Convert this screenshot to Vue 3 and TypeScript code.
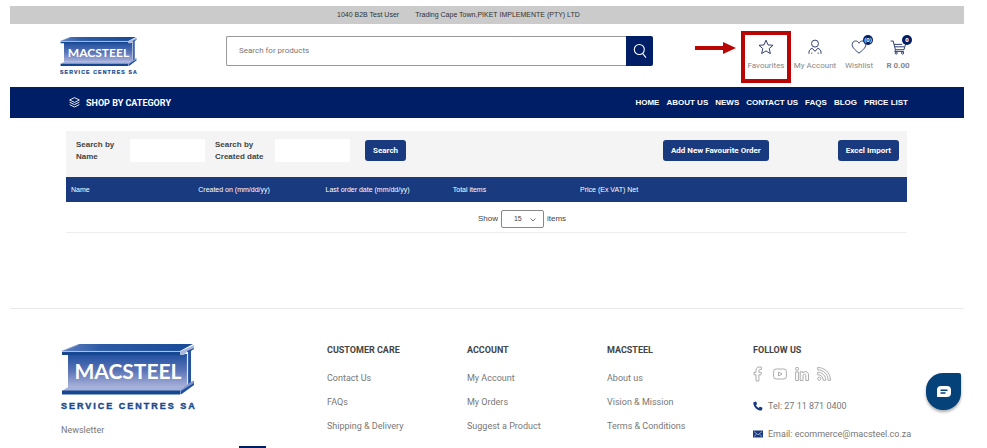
<script setup lang="ts">
import { ref } from 'vue'

interface FooterColumn {
  title: string
  links: string[]
}

const navLinks: string[] = ['HOME', 'ABOUT US', 'NEWS', 'CONTACT US', 'FAQS', 'BLOG', 'PRICE LIST']
const tableColumns: string[] = [
  'Name',
  'Created on (mm/dd/yy)',
  'Last order date (mm/dd/yy)',
  'Total items',
  'Price (Ex VAT) Net',
]
const footerColumns: FooterColumn[] = [
  { title: 'CUSTOMER CARE', links: ['Contact Us', 'FAQs', 'Shipping & Delivery'] },
  { title: 'ACCOUNT', links: ['My Account', 'My Orders', 'Suggest a Product'] },
  { title: 'MACSTEEL', links: ['About us', 'Vision & Mission', 'Terms & Conditions'] },
]

const query = ref('')
const nameFilter = ref('')
const dateFilter = ref('')
const pageSize = ref(15)
const email = ref('')
</script>

<template>
  <svg class="defs" width="0" height="0" aria-hidden="true">
    <defs>
      <linearGradient id="web" x1="0" y1="0" x2="0" y2="1">
        <stop offset="0" stop-color="#1f4f9f" />
        <stop offset="0.5" stop-color="#5a73b6" />
        <stop offset="1" stop-color="#a9b1da" />
      </linearGradient>
      <linearGradient id="flange" x1="0" y1="0" x2="1" y2="0">
        <stop offset="0" stop-color="#5f80bf" />
        <stop offset="0.3" stop-color="#2c5aa6" />
        <stop offset="1" stop-color="#174a97" />
      </linearGradient>
      <symbol id="macsteel" viewBox="0 0 134 66" overflow="visible">
        <path d="M7 10h119v33H7z" fill="url(#web)" />
        <path d="M1 7 18 0h114l-13 7z" fill="url(#flange)" />
        <path d="M1 7 18 .3" stroke="#a9b9de" stroke-width="0.8" />
        <path d="M1 7.400h118" stroke="#8fa5d3" stroke-width="0.8" />
        <path d="M1 8h118v3H1z" fill="#164891" />
        <path d="M126 6l7-4v3l-3 2v32l-4 3z" fill="#2454a0" />
        <path d="M119 11V7.500L133 1v3l-6 2.500-4 4.500z" fill="#a9b9de" />
        <path d="M126.500 8v34" stroke="#dfe5f3" stroke-width="1.200" />
        <path d="M1 47 8 42.500h116l-5 4.500z" fill="#a4b1da" />
        <path d="M1 46.500h118v4H1z" fill="#164891" />
        <path d="M119 50.500v-4l10-8 4-2v3.500z" fill="#7e94c9" />
        <path d="M120 50.500 133 41v-2l-13 8z" fill="#1f4f9f" />
        <text x="67" y="35" text-anchor="middle" font-family="Lato, sans-serif" font-size="21" font-weight="700" fill="#fff">MACSTEEL</text>
        <text x="0" y="65" font-family="'Liberation Sans', sans-serif" font-size="9" font-weight="700" letter-spacing="2" fill="#174a8f" stroke="#174a8f" stroke-width="0.4">SERVICE CENTRES SA</text>
      </symbol>
    </defs>
  </svg>

  <div class="page">
    <div class="topbar">
      <span>1040 B2B Test User</span>
      <span>Trading Cape Town,PIKET IMPLEMENTE (PTY) LTD</span>
    </div>

    <header class="header">
      <a class="logo" href="#" aria-label="Macsteel Service Centres SA">
        <svg class="logo-small"><use href="#macsteel" /></svg>
      </a>
      <form class="search" @submit.prevent>
        <input v-model="query" type="text" placeholder="Search for products" aria-label="Search for products" />
        <button type="submit" aria-label="Search">
          <svg width="14" height="16" viewBox="0 0 14 16" fill="none" stroke="#fff" stroke-width="1.1">
            <circle cx="6.3" cy="6.5" r="5" />
            <path d="M9.6 10.4 13 14.6" />
          </svg>
        </button>
      </form>
      <nav class="actions" aria-label="Account">
        <a class="action highlighted" href="#">
          <svg class="arrow" width="41" height="12" viewBox="0 0 41 12" aria-hidden="true">
            <path d="M0 4h28V0l13 6-13 6V8H0z" fill="#b90504" />
          </svg>
          <svg width="16" height="16" viewBox="0 0 16 16" class="line">
            <path d="M8 1.2 10 5.9 15 6.3 11.2 9.6 12.4 14.6 8 11.9 3.6 14.6 4.8 9.6 1 6.3 6 5.9z" />
          </svg>
          <span>Favourites</span>
        </a>
        <a class="action" href="#">
          <svg width="16" height="16" viewBox="0 0 16 16" class="line">
            <circle cx="8" cy="4.6" r="3.5" />
            <path d="M2 14.8v-1.6c0-2 1.4-3.4 3.3-3.9L8 12.4l2.7-3.1c1.9.5 3.3 1.9 3.3 3.9v1.6M4.8 14.8v-1.2M11.2 14.8v-1.2" />
          </svg>
          <span>My Account</span>
        </a>
        <a class="action" href="#">
          <svg width="16" height="16" viewBox="0 0 16 16" class="line">
            <path d="M8 14.2C5.4 12 1.2 9.1 1.2 5.6 1.2 3.5 2.7 2 4.6 2 6 2 7.3 2.8 8 4.2 8.7 2.8 10 2 11.4 2c1.9 0 3.4 1.5 3.4 3.6 0 3.500-4.200 6.400-6.800 8.600z" />
          </svg>
          <span>Wishlist</span>
          <b class="badge">(0)</b>
        </a>
        <a class="action cart" href="#">
          <svg width="16" height="16" viewBox="0 0 16 16" class="line">
            <path d="M.6 2h2.600L5.400 10.700h8.600L15.600 5M4.600 7.800h9.800M4.200 5.400h8M5.400 10.700l-.6 1.700h9" />
            <circle cx="6.200" cy="14" r="1.100" />
            <circle cx="12.600" cy="14" r="1.100" />
          </svg>
          <span>R 0.00</span>
          <b class="badge">0</b>
        </a>
      </nav>
    </header>

    <div class="menubar">
      <a class="category" href="#">
        <svg width="11" height="11" viewBox="0 0 11 11" fill="none" stroke="#fff" stroke-width="0.9">
          <path d="M5.500.6 10.400 3 5.500 5.400.6 3zM.6 5.200l4.900 2.400 4.900-2.400M.6 7.600 5.500 10l4.900-2.400" />
        </svg>
        SHOP BY CATEGORY
      </a>
      <nav class="links" aria-label="Main">
        <a v-for="link in navLinks" :key="link" href="#">{{ link }}</a>
      </nav>
    </div>

    <main class="content">
      <form class="filters" @submit.prevent>
        <label class="label-name" for="filter-name">Search by Name</label>
        <input id="filter-name" v-model="nameFilter" type="text" />
        <label class="label-date" for="filter-date">Search by Created date</label>
        <input id="filter-date" v-model="dateFilter" type="text" />
        <button class="btn" type="submit">Search</button>
        <div class="right">
          <button class="btn" type="button">Add New Favourite Order</button>
          <button class="btn" type="button">Excel Import</button>
        </div>
      </form>
      <table class="orders">
        <thead>
          <tr>
            <th v-for="column in tableColumns" :key="column" scope="col">{{ column }}</th>
          </tr>
        </thead>
      </table>
      <div class="pager">
        <label for="page-size">Show</label>
        <span class="select">
          <select id="page-size" v-model="pageSize">
            <option :value="15">15</option>
            <option :value="30">30</option>
            <option :value="50">50</option>
          </select>
          <svg width="6" height="4" viewBox="0 0 6 4" fill="none" stroke="#777"><path d="M.5.500 3 3 5.500.500" /></svg>
        </span>
        <span>items</span>
      </div>
    </main>

    <footer class="footer">
      <section class="brand">
        <svg class="logo-large" role="img" aria-label="Macsteel Service Centres SA"><use href="#macsteel" /></svg>
        <form class="newsletter" @submit.prevent>
          <label for="newsletter-email">Newsletter</label>
          <div class="subscribe">
            <input id="newsletter-email" v-model="email" type="email" />
            <button type="submit" aria-label="Subscribe"></button>
          </div>
        </form>
      </section>
      <section v-for="column in footerColumns" :key="column.title">
        <h2>{{ column.title }}</h2>
        <ul>
          <li v-for="link in column.links" :key="link"><a href="#">{{ link }}</a></li>
        </ul>
      </section>
      <section>
        <h2>FOLLOW US</h2>
        <div class="social">
          <a href="#" aria-label="Facebook">
            <svg width="14" height="16" viewBox="0 0 14 16">
              <path d="M5 15V8.800H3V6.300h2V4.200C5 2.100 6.200 1 8.200 1H10.400v2.500H9c-.8 0-1.100.4-1.100 1.100v1.700h2.400L9.900 8.800h-2V15z" />
            </svg>
          </a>
          <a href="#" aria-label="YouTube">
            <svg width="14" height="16" viewBox="0 0 14 16">
              <rect x="0.600" y="3" width="12.800" height="10" rx="2.500" />
              <path d="M5.500 6v4l3.500-2z" />
            </svg>
          </a>
          <a href="#" aria-label="LinkedIn">
            <svg width="14" height="16" viewBox="0 0 14 16">
              <circle cx="2" cy="2.800" r="1.500" />
              <path d="M.6 5.800h2.800V14.500H.6zM5.200 5.800h2.600v1.200c1.200-2 5.700-2 5.700 2v5.500h-2.700V9.800c0-2.300-2.800-2.300-2.800 0v4.700H5.200z" />
            </svg>
          </a>
          <a href="#" aria-label="RSS">
            <svg width="14" height="16" viewBox="0 0 14 16">
              <circle cx="2.300" cy="12.700" r="1.600" />
              <path d="M.7 6.200c4.600 0 8.100 3.500 8.100 8.100H6.300c0-3.200-2.400-5.600-5.600-5.600zM.7 1.500c7.200 0 12.800 5.600 12.800 12.800h-2.400C11.100 8.400 6.600 3.900.7 3.900z" />
            </svg>
          </a>
        </div>
        <a class="contact" href="#">
          <svg width="10" height="10" viewBox="0 0 10 10" fill="#1a3a80">
            <path d="M.7 1.200 2.600.5c.3-.1.500 0 .6.300l.8 2c.1.200 0 .4-.2.600l-.9.700c.6 1.300 1.500 2.200 2.800 2.800l.8-.9c.1-.2.400-.3.600-.2l2 .8c.3.100.4.400.3.600L9 9c-.1.300-.3.500-.6.500C4 9.500.3 6 .3 1.700c0-.2.100-.4.400-.5z" />
          </svg>
          <span>Tel: 27 11 871 0400</span>
        </a>
        <a class="contact" href="#">
          <svg width="10" height="10" viewBox="0 0 10 10">
            <path d="M0 1.500h10v7H0z" fill="#1a3a80" />
            <path d="M1 2.600 5 5.800 9 2.600M1 7.600l2.600-2.400M9 7.600 6.400 5.200" fill="none" stroke="#c5cfe4" stroke-width="0.700" />
          </svg>
          <span>Email: ecommerce@macsteel.co.za</span>
        </a>
      </section>
    </footer>
    <button class="chat" type="button" aria-label="Chat">
      <svg width="16" height="14" viewBox="0 0 16 14">
        <path d="M5 1h6a4 4 0 0 1 4 4v3a4 4 0 0 1-4 4H1V5a4 4 0 0 1 4-4z" fill="#fff" />
        <path d="M4.500 5.200h7M4.500 8h5" stroke="#06427a" stroke-width="1.400" />
      </svg>
    </button>
  </div>
</template>

<style>
body {
  background: #fff;
  overflow: hidden;
}
</style>

<style scoped>
.page {
  margin: 6px 23px 0 10px;
  font: 9px/12px 'Liberation Sans', Arial, sans-serif;
  color: #444;
}
.defs {
  position: absolute;
}
a {
  color: inherit;
  text-decoration: none;
}
input,
select,
button {
  box-sizing: border-box;
  margin: 0;
  padding: 0;
  border: 0;
  font: inherit;
  color: inherit;
}
.topbar {
  display: flex;
  gap: 16px;
  padding: 0 327px;
  background: #cbcbcb;
  font-size: 7px;
  line-height: 18px;
  white-space: nowrap;
  color: #333;
}
.header {
  display: flex;
  align-items: center;
  height: 63px;
  padding: 0 47px 0 50px;
}
.logo-small {
  display: block;
  width: 77px;
  height: 38px;
  overflow: visible;
}
.search {
  display: flex;
  flex: 1;
  max-width: 427px;
  height: 30px;
  margin: 0 0 9px 89px;
}
.search input {
  flex: 1;
  min-width: 0;
  padding: 0 12px;
  border: 1px solid #999;
  border-right: 0;
  border-radius: 2px 0 0 2px;
  font-family: Roboto, sans-serif;
  font-size: 8px;
}
.search input::placeholder {
  color: #777;
  opacity: 1;
}
.search button {
  display: grid;
  place-items: center;
  width: 27px;
  border-radius: 0 2px 2px 0;
  background: #001e66;
}
.actions {
  display: grid;
  grid-template-columns: 50px 48px 40px 38px;
  margin-left: auto;
  font-family: Roboto, sans-serif;
  font-size: 8px;
  color: #888;
}
.action {
  position: relative;
  display: flex;
  flex-direction: column;
  align-items: center;
  gap: 5px;
  white-space: nowrap;
}
.line {
  fill: none;
  stroke: #1d2c62;
  stroke-width: 0.9;
}
.highlighted::after {
  content: '';
  position: absolute;
  inset: -8px 0 -11px;
  border: 4px solid #b90504;
}
.arrow {
  position: absolute;
  top: 3px;
  right: 55px;
}
.badge {
  position: absolute;
  top: -4px;
  left: 50%;
  width: 10px;
  margin-left: 4px;
  border-radius: 50%;
  background: #001e66;
  color: #fff;
  font-size: 6px;
  line-height: 10px;
  text-align: center;
}
.cart {
  font-weight: 700;
}
.menubar {
  display: flex;
  align-items: center;
  justify-content: space-between;
  height: 31px;
  padding: 0 56px 0 59px;
  background: #001e66;
  color: #fff;
  font-weight: 700;
}
.category {
  display: flex;
  align-items: center;
  gap: 6px;
  font-family: Roboto, sans-serif;
}
.links {
  display: flex;
  gap: 7px;
  font-size: 8px;
}
.content {
  margin: 13px 57px 0 56px;
}
.filters {
  display: flex;
  align-items: flex-start;
  height: 38px;
  padding: 8px 8px 0 10px;
  background: #f4f4f4;
  font-weight: 700;
  font-size: 8px;
}
.filters input {
  width: 75px;
  height: 23px;
  background: #fff;
}
.label-name {
  width: 54px;
}
.label-date {
  width: 60px;
  margin-left: 10px;
}
.btn {
  height: 21px;
  margin: 1px 0 0 15px;
  padding: 0 8px;
  border-radius: 3px;
  background: #1a3a80;
  color: #fff;
  font-family: Roboto, sans-serif;
}
.right {
  display: flex;
  gap: 54px;
  margin-left: auto;
}
.orders {
  width: 100%;
  border-collapse: collapse;
  table-layout: fixed;
  background: #1a3a80;
  color: #fff;
  font-size: 7px;
}
.orders th {
  height: 25px;
  padding: 0 5px;
  font-weight: 400;
  text-align: left;
}
.orders th:last-child {
  width: 322px;
}
.pager {
  display: flex;
  align-items: center;
  justify-content: center;
  gap: 3px;
  height: 31px;
  padding: 4px 0 0 71px;
  border-bottom: 1px solid #eee;
  box-sizing: border-box;
  font-size: 8px;
}
.select {
  position: relative;
}
.select select {
  width: 43px;
  height: 18px;
  padding-left: 12px;
  border: 1px solid #888;
  border-radius: 2px;
  background: #fff;
  font-size: 7px;
  appearance: none;
}
.select svg {
  position: absolute;
  top: 8px;
  right: 8px;
  pointer-events: none;
}
.footer {
  display: grid;
  grid-template-columns: 266px 140px 140px 146px 1fr;
  margin-top: 75px;
  padding: 35px 20px 0 51px;
  border-top: 1px solid #eaeaea;
  color: #777;
  font-family: Roboto, sans-serif;
  white-space: nowrap;
}
.footer h2 {
  margin: 0 0 10px;
  font-size: 9px;
  line-height: 12px;
  color: #444;
}
.footer ul {
  margin: 0;
  padding: 0;
  list-style: none;
}
.footer li {
  line-height: 24px;
}
.logo-large {
  display: block;
  width: 134px;
  height: 66px;
  overflow: visible;
}
.newsletter {
  display: flex;
  flex-direction: column;
  gap: 10px;
  margin-top: 14px;
}
.subscribe {
  display: flex;
  width: 205px;
  height: 28px;
}
.subscribe input {
  flex: 1;
  min-width: 0;
}
.subscribe button {
  width: 27px;
  background: #001e66;
}
.social {
  display: flex;
  gap: 8px;
  margin: 0 0 18px -2px;
}
.social svg {
  display: block;
  fill: none;
  stroke: #999;
  stroke-width: 0.8;
}
.contact {
  display: flex;
  align-items: center;
  gap: 5px;
  margin-bottom: 16px;
}
.chat {
  position: fixed;
  right: 26px;
  bottom: 38px;
  display: grid;
  place-items: center;
  width: 35px;
  height: 37px;
  border-radius: 17px 2px 17px 17px;
  background: #06427a;
  box-shadow: 0 2px 3px #0005;
}
</style>
